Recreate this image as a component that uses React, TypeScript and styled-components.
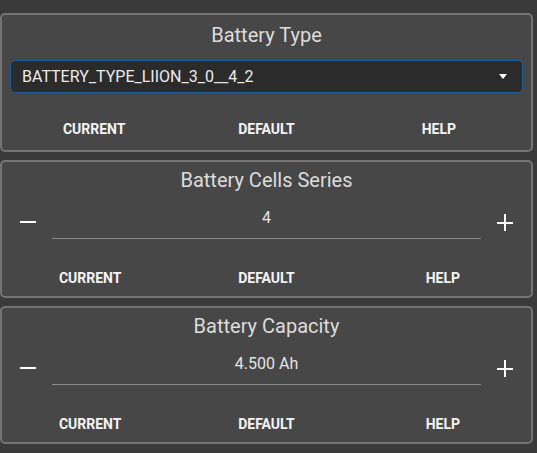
import React from 'react';
import styled, { createGlobalStyle } from 'styled-components';

const GlobalStyle = createGlobalStyle`
  html, body {
    margin: 0;
    padding: 0;
    background: #3a3a3a;
    font-family: Roboto, 'Liberation Sans', sans-serif;
  }
`;

type Setting = {
  title: string;
  kind: 'select' | 'stepper';
  value: string;
};

const SETTINGS: Setting[] = [
  { title: 'Battery Type', kind: 'select', value: 'BATTERY_TYPE_LIION_3_0__4_2' },
  { title: 'Battery Cells Series', kind: 'stepper', value: '4' },
  { title: 'Battery Capacity', kind: 'stepper', value: '4.500 Ah' },
];

const ACTIONS = ['Current', 'Default', 'Help'];

const MinusIcon = () => (
  <svg width="16" height="16" viewBox="0 0 16 16">
    <rect x="0" y="7" width="16" height="2" fill="#fff" />
  </svg>
);

const PlusIcon = () => (
  <svg width="16" height="17" viewBox="0 0 16 17">
    <rect x="0" y="8" width="16" height="2" fill="#fff" />
    <rect x="7" y="0" width="2" height="17" fill="#fff" />
  </svg>
);

const SettingCard = ({ setting }: { setting: Setting }) => {
  const isSelect = setting.kind === 'select';
  return (
    <Card $select={isSelect}>
      <Title>{setting.title}</Title>
      {isSelect ? (
        <Select>
          <span>{setting.value}</span>
          <Caret />
        </Select>
      ) : (
        <StepperRow>
          <IconButton>
            <MinusIcon />
          </IconButton>
          <ValueInput>{setting.value}</ValueInput>
          <IconButton>
            <PlusIcon />
          </IconButton>
        </StepperRow>
      )}
      <Actions $select={isSelect}>
        {ACTIONS.map((a) => (
          <ActionButton key={a}>{a}</ActionButton>
        ))}
      </Actions>
    </Card>
  );
};

const App = () => (
  <>
    <GlobalStyle />
    <Page>
      {SETTINGS.map((s) => (
        <SettingCard key={s.title} setting={s} />
      ))}
    </Page>
  </>
);

export default App;

const Page = styled.div`
  width: 533px;
  padding-top: 13px;
  display: flex;
  flex-direction: column;
  gap: 8px;
`;

const Card = styled.section<{ $select: boolean }>`
  background: #474747;
  border: 2px solid #747474;
  border-radius: 5px;
  padding: ${({ $select }) => ($select ? '8px 0 3px' : '6px 0 0')};
  display: flex;
  flex-direction: column;
`;

const Title = styled.div`
  text-align: center;
  color: #dcdcdc;
  font-size: 20px;
  line-height: 24px;
`;

const Select = styled.div`
  margin: 13px 8px 0;
  height: 33px;
  box-sizing: border-box;
  background: #2b2b2b;
  border: 1px solid #1a5f9c;
  border-radius: 5px;
  display: flex;
  align-items: center;
  justify-content: space-between;
  padding: 0 15px 0 11px;
  color: #ececec;
  font-size: 16px;
`;

const Caret = styled.span`
  width: 0;
  height: 0;
  border-left: 4px solid transparent;
  border-right: 4px solid transparent;
  border-top: 5px solid #fff;
`;

const StepperRow = styled.div`
  margin-top: 4px;
  padding: 0 6px;
  display: flex;
  align-items: center;
  gap: 4px;
`;

const IconButton = styled.button`
  width: 40px;
  height: 40px;
  margin-top: 6px;
  padding: 0;
  border: none;
  background: transparent;
  display: flex;
  align-items: center;
  justify-content: center;
`;

const ValueInput = styled.div`
  flex: 1;
  height: 40px;
  box-sizing: border-box;
  border-bottom: 1px solid #8a8a8a;
  display: flex;
  align-items: center;
  justify-content: center;
  padding-bottom: 2px;
  color: #e4e4e4;
  font-size: 16px;
`;

const Actions = styled.div<{ $select: boolean }>`
  margin-top: 18px;
  padding: ${({ $select }) => ($select ? '0 6px' : '0')};
  display: grid;
  grid-template-columns: repeat(3, 1fr);
`;

const ActionButton = styled.button`
  height: 36px;
  border: none;
  background: transparent;
  color: #f4f4f4;
  font-family: Roboto, 'Liberation Sans', sans-serif;
  font-size: 14px;
  font-weight: 700;
  text-transform: uppercase;
`;
